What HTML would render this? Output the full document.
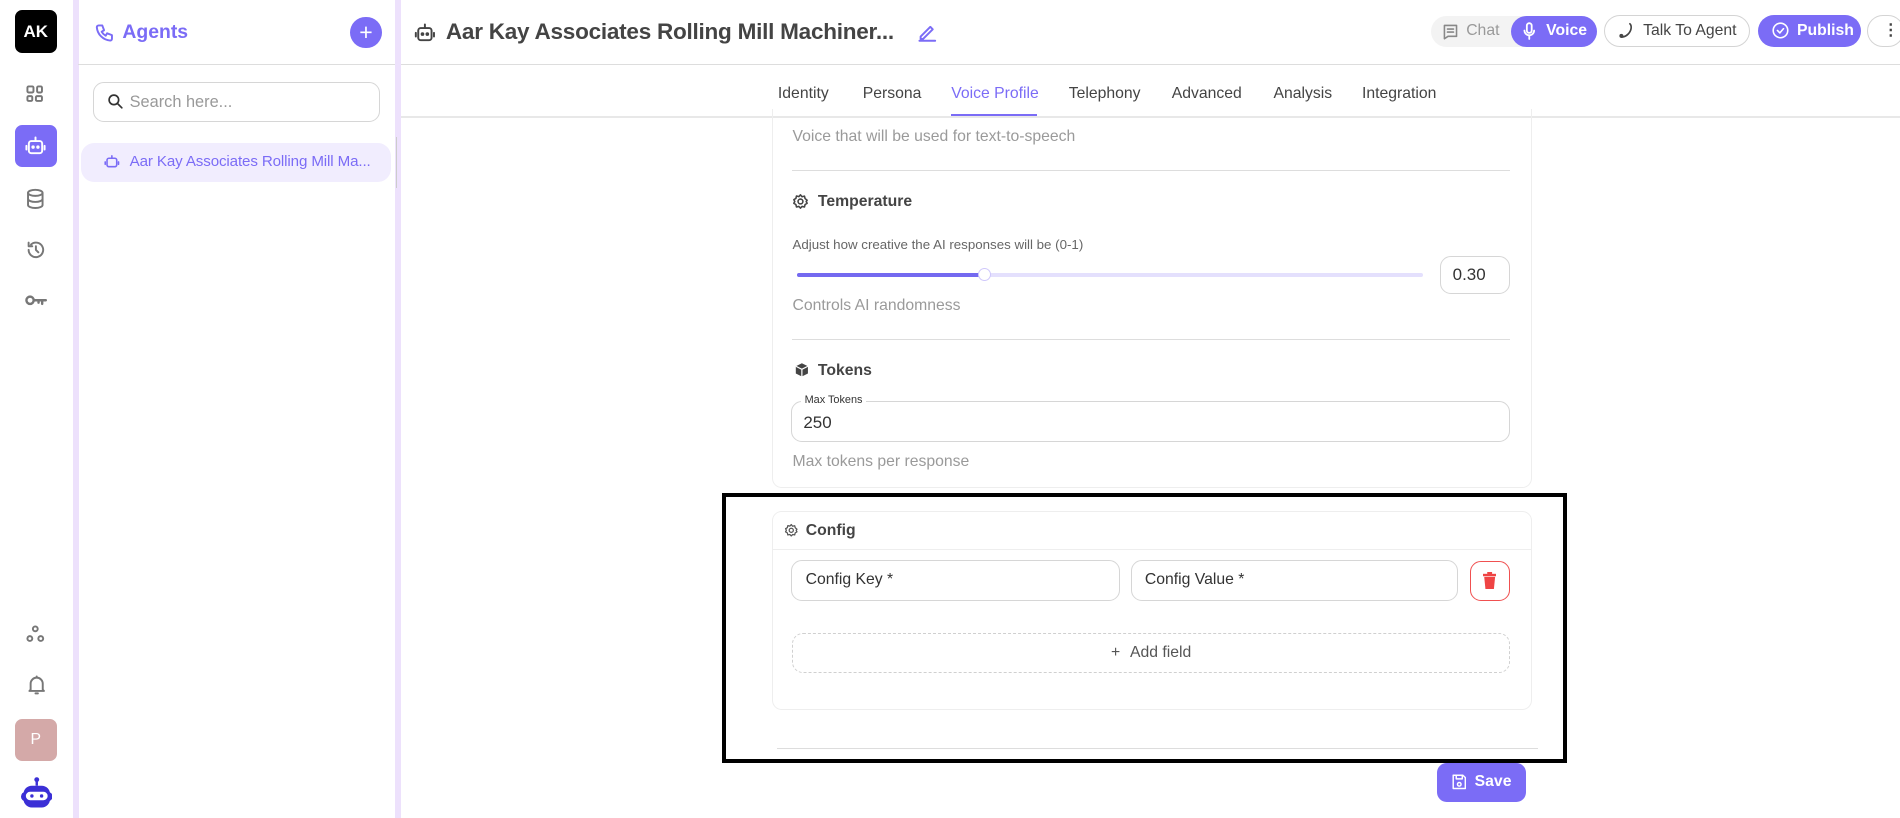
<!DOCTYPE html>
<html><head><meta charset="utf-8"><style>
*{box-sizing:border-box;margin:0;padding:0}
html,body{width:1900px;height:818px;overflow:hidden;background:#fff}
#root{position:absolute;left:0;top:0;width:1568px;height:675px;zoom:1.21173;font-family:"Liberation Sans",sans-serif;color:#444;overflow:hidden}
.a{position:absolute}
.ic{position:absolute;fill:none;stroke:#777;stroke-width:1.6;stroke-linecap:round;stroke-linejoin:round}
.strip{background:#ede1fc;top:0;height:675px;width:5px}
.tab{position:absolute;top:70px;font-size:13px;color:#444}
.hr{position:absolute;height:1px;background:#ddd}
.gray{color:#9a9a9a;font-size:13px}
.inp{position:absolute;border:1px solid #d6d6d6;border-radius:9px;background:#fff}
</style></head><body><div id="root">
<!-- left rail -->
<div class="a" style="left:12px;top:8px;width:35px;height:36px;background:#000;border-radius:6px;color:#fff;font-weight:bold;font-size:14px;line-height:36px;text-align:center">AK</div>
<svg class="ic" style="left:21px;top:69px" width="16" height="16" viewBox="0 0 16 16"><rect x="2" y="2" width="5" height="5" rx="1"/><rect x="10" y="2" width="4" height="5" rx="1"/><rect x="2" y="10" width="4" height="4" rx="1"/><rect x="9" y="10" width="5" height="4" rx="1"/></svg>
<div class="a" style="left:12px;top:103px;width:35px;height:35px;background:#7b6cf6;border-radius:6px"></div>
<svg class="ic" style="left:20px;top:111px;stroke:#fff" width="19" height="19" viewBox="0 0 19 19"><rect x="4" y="5" width="11" height="10" rx="2"/><path d="M9.5 5V2M2 9v3M17 9v3"/><circle cx="7.5" cy="10" r=".6" fill="#fff"/><circle cx="11.5" cy="10" r=".6" fill="#fff"/></svg>
<svg class="ic" style="left:21px;top:155px" width="17" height="18" viewBox="0 0 17 18"><ellipse cx="8.5" cy="4" rx="6" ry="2.5"/><path d="M2.5 4v10c0 1.4 2.7 2.5 6 2.5s6-1.1 6-2.5V4M2.5 9c0 1.4 2.7 2.5 6 2.5s6-1.1 6-2.5"/></svg>
<svg class="ic" style="left:21px;top:197px" width="18" height="18" viewBox="0 0 18 18"><path d="M3 9a6 6 0 1 0 2-4.5M3 3v3h3M9 6v3l2 2"/></svg>
<svg class="ic" style="left:20px;top:242px;stroke-width:2" width="20" height="12" viewBox="0 0 20 12"><circle cx="5" cy="6" r="3"/><path d="M8 6h10M15 6v3M12 6v2"/></svg>
<svg class="ic" style="left:21px;top:515px" width="17" height="17" viewBox="0 0 17 17"><circle cx="8.5" cy="4" r="2"/><circle cx="4" cy="12" r="2"/><circle cx="13" cy="12" r="2"/></svg>
<svg class="ic" style="left:22px;top:556px" width="16" height="18" viewBox="0 0 16 18"><path d="M3 13V8a5 5 0 0 1 10 0v5l1 1H2zM7 16h2M8 2v1"/></svg>
<div class="a" style="left:12px;top:593px;width:35px;height:35px;background:#d4a9a8;border-radius:6px;color:#fff;font-size:13px;line-height:35px;text-align:center">P</div>
<svg class="a" style="left:17px;top:640px" width="26" height="28" viewBox="0 0 26 28"><circle cx="13" cy="3" r="2" fill="#3b2fd6"/><rect x="12" y="3" width="2" height="5" fill="#3b2fd6"/><rect x="2" y="8" width="22" height="18" rx="7" fill="#3b2fd6"/><rect x="0" y="13" width="26" height="8" rx="4" fill="#3b2fd6"/><rect x="4" y="13" width="18" height="7" rx="3.5" fill="#fff"/><circle cx="9" cy="16.5" r="1.4" fill="#3b2fd6"/><circle cx="17" cy="16.5" r="1.4" fill="#3b2fd6"/></svg>
<div class="a strip" style="left:60px"></div>
<div class="a strip" style="left:326px"></div>
<!-- agents panel -->
<svg class="ic" style="left:78px;top:19px;stroke:#7b6cf6" width="16" height="16" viewBox="0 0 16 16"><path d="M3 2h3l1.5 4-2 1.2a9 9 0 0 0 3.3 3.3L10 8.5l4 1.5v3a1.5 1.5 0 0 1-1.5 1.5A12 12 0 0 1 1.5 3.5 1.5 1.5 0 0 1 3 2z"/></svg>
<div class="a" style="left:101px;top:17px;font-size:16px;font-weight:bold;color:#7b6cf6">Agents</div>
<div class="a" style="left:289px;top:14px;width:26px;height:26px;border-radius:50%;background:#7b6cf6;color:#fff;font-size:19px;line-height:25px;text-align:center">+</div>
<div class="hr" style="left:64px;top:53px;width:262px"></div>
<div class="inp" style="left:77px;top:68px;width:237px;height:33px"></div>
<svg class="ic" style="left:88px;top:77px;stroke:#333;stroke-width:1.6" width="14" height="14" viewBox="0 0 16 16"><circle cx="6.5" cy="6.5" r="4.5"/><path d="M10 10l4 4"/></svg>
<div class="a" style="left:107px;top:77px;font-size:13.5px;color:#999">Search here...</div>
<div class="a" style="left:67px;top:118px;width:256px;height:32px;background:#f1edfe;border-radius:11px"></div>
<svg class="ic" style="left:86px;top:127px;stroke:#7b6cf6;stroke-width:1.3" width="13" height="13" viewBox="0 0 13 13"><rect x="2.5" y="3.5" width="8" height="7" rx="1.5"/><path d="M6.5 3.5V1.5M1 6.5v2M12 6.5v2"/></svg>
<div class="a" style="left:107px;top:126px;font-size:12.5px;color:#7b6cf6;letter-spacing:-0.1px">Aar Kay Associates Rolling Mill Ma...</div>
<div class="a" style="left:327px;top:113px;width:1px;height:42px;background:#ccc"></div>
<!-- main header -->
<svg class="ic" style="left:342px;top:18px;stroke:#444;stroke-width:1.6" width="18" height="18" viewBox="0 0 18 18"><rect x="3.5" y="5" width="11" height="10" rx="2"/><path d="M9 5V2M1.5 9v3M16.5 9v3"/><circle cx="7" cy="10" r=".7" fill="#444"/><circle cx="11" cy="10" r=".7" fill="#444"/></svg>
<div class="a" style="left:368px;top:16px;font-size:18.6px;font-weight:bold;color:#444;letter-spacing:-0.2px">Aar Kay Associates Rolling Mill Machiner...</div>
<svg class="ic" style="left:757px;top:18px;stroke:#7b6cf6" width="17" height="17" viewBox="0 0 17 17"><path d="M3 12l8-8 2 2-8 8H3zM2 15.5h13"/></svg>
<div class="a" style="left:1181px;top:13px;width:137px;height:26px;background:#f3f3f3;border-radius:13px"></div>
<svg class="ic" style="left:1190px;top:19px;stroke:#888;stroke-width:1.3" width="14" height="14" viewBox="0 0 14 14"><path d="M2 2h10v9H5l-3 2zM4.5 5h5M4.5 7.5h5"/></svg>
<div class="a" style="left:1210px;top:18px;font-size:13px;color:#999">Chat</div>
<div class="a" style="left:1247px;top:13px;width:71px;height:26px;background:#7b6cf6;border-radius:13px"></div>
<svg class="ic" style="left:1256px;top:18px;stroke:#fff;stroke-width:1.5" width="12" height="16" viewBox="0 0 12 16"><rect x="4" y="1" width="4" height="8" rx="2"/><path d="M2 7a4 4 0 0 0 8 0M6 11v3"/></svg>
<div class="a" style="left:1276px;top:18px;font-size:13px;color:#fff;font-weight:bold">Voice</div>
<div class="a" style="left:1324px;top:12px;width:120px;height:27px;border:1px solid #d4d4d4;border-radius:14px"></div>
<svg class="ic" style="left:1336px;top:18px;stroke:#444;stroke-width:1.4" width="13" height="14" viewBox="0 0 13 14"><path d="M9 1.5c2 2 1 6-1.5 8.5S2 13 1.5 11.5"/><circle cx="2" cy="11.5" r="1" /></svg>
<div class="a" style="left:1356px;top:18px;font-size:13px;color:#444">Talk To Agent</div>
<div class="a" style="left:1451px;top:12px;width:85px;height:27px;background:#7b6cf6;border-radius:14px"></div>
<svg class="ic" style="left:1462px;top:18px;stroke:#fff;stroke-width:1.3" width="14" height="14" viewBox="0 0 14 14"><circle cx="7" cy="7" r="6"/><path d="M4.5 7l2 2 3-3.5"/></svg>
<div class="a" style="left:1483px;top:18px;font-size:13px;color:#fff;font-weight:bold">Publish</div>
<div class="a" style="left:1541px;top:12px;width:30px;height:27px;border:1px solid #d4d4d4;border-radius:14px;font-size:13px;line-height:24px;padding-left:12px;font-weight:bold">⋮</div>
<div class="hr" style="left:331px;top:53px;width:1237px"></div>
<!-- tabs -->
<div class="tab" style="left:642px">Identity</div>
<div class="tab" style="left:712px">Persona</div>
<div class="tab" style="left:785px;color:#7b6cf6">Voice Profile</div>
<div class="a" style="left:785px;top:94px;width:71px;height:2px;background:#7b6cf6"></div>
<div class="tab" style="left:882px">Telephony</div>
<div class="tab" style="left:967px">Advanced</div>
<div class="tab" style="left:1051px">Analysis</div>
<div class="tab" style="left:1124px">Integration</div>
<div class="hr" style="left:331px;top:96px;width:1237px;background:#e8e8e8"></div>
<!-- card -->
<div class="a" style="left:637px;top:90px;width:627px;height:313px;border:1px solid #eee;border-top:none;border-radius:0 0 8px 8px"></div>
<div class="a gray" style="left:654px;top:106px">Voice that will be used for text-to-speech</div>
<div class="hr" style="left:654px;top:140px;width:592px"></div>
<svg class="ic" style="left:654px;top:159px;stroke:#444;stroke-width:1.3" width="14" height="14" viewBox="0 0 14 14"><circle cx="7" cy="7" r="2"/><path d="M7 1.5l1.3 1.6 2-.5.5 2L12.5 6 11.7 7l.8 1.5-1.7 1-.5 2-2-.4L7 12.5 5.7 11.1l-2 .4-.5-2-1.7-1L2.3 7 1.5 5.5l1.7-1 .5-2 2 .5z"/></svg>
<div class="a" style="left:675px;top:159px;font-size:13px;font-weight:bold;color:#444">Temperature</div>
<div class="a" style="left:654px;top:196px;font-size:11px;color:#666">Adjust how creative the AI responses will be (0-1)</div>
<div class="a" style="left:658px;top:225px;width:516px;height:4px;background:#e4e0fd;border-radius:2px"></div>
<div class="a" style="left:658px;top:225px;width:155px;height:4px;background:#7469f0;border-radius:2px"></div>
<div class="a" style="left:807px;top:221px;width:11px;height:11px;border-radius:50%;background:#fff;border:1px solid #cfc8fb"></div>
<div class="inp" style="left:1188px;top:211px;width:58px;height:32px;font-size:14px;line-height:30px;padding-left:10px;color:#333">0.30</div>
<div class="a gray" style="left:654px;top:245px">Controls AI randomness</div>
<div class="hr" style="left:654px;top:280px;width:592px"></div>
<svg class="a" style="left:655px;top:299px" width="13" height="13" viewBox="0 0 13 13"><path d="M6.5 1l5 2.5v6L6.5 12l-5-2.5v-6z" fill="#444"/><path d="M1.5 3.5l5 2.5 5-2.5M6.5 6v6" stroke="#fff" stroke-width="1" fill="none"/></svg>
<div class="a" style="left:675px;top:299px;font-size:13px;font-weight:bold;color:#444">Tokens</div>
<div class="inp" style="left:653px;top:331px;width:593px;height:34px"></div>
<div class="a" style="left:661px;top:325px;font-size:9px;color:#333;background:#fff;padding:0 3px">Max Tokens</div>
<div class="a" style="left:663px;top:341px;font-size:14px;color:#333">250</div>
<div class="a gray" style="left:654px;top:374px">Max tokens per response</div>
<!-- config -->
<div class="a" style="left:637px;top:422px;width:627px;height:164px;border:1px solid #eee;border-radius:8px"></div>
<svg class="ic" style="left:647px;top:432px;stroke:#555;stroke-width:1.2" width="12" height="12" viewBox="0 0 14 14"><circle cx="7" cy="7" r="2"/><path d="M7 1.5l1.3 1.6 2-.5.5 2L12.5 6 11.7 7l.8 1.5-1.7 1-.5 2-2-.4L7 12.5 5.7 11.1l-2 .4-.5-2-1.7-1L2.3 7 1.5 5.5l1.7-1 .5-2 2 .5z"/></svg>
<div class="a" style="left:665px;top:431px;font-size:13px;font-weight:bold;color:#444">Config</div>
<div class="hr" style="left:637px;top:453px;width:627px;background:#eee"></div>
<div class="inp" style="left:653px;top:462px;width:271px;height:34px;font-size:13px;line-height:32px;padding-left:11px;color:#333">Config Key *</div>
<div class="inp" style="left:933px;top:462px;width:270px;height:34px;font-size:13px;line-height:32px;padding-left:11px;color:#333">Config Value *</div>
<div class="a" style="left:1213px;top:463px;width:33px;height:33px;border:1px solid #f05050;border-radius:9px"></div>
<svg class="a" style="left:1224px;top:472px" width="11" height="14" viewBox="0 0 11 14"><rect x="0" y="1.5" width="11" height="2" fill="#ef4444"/><rect x="3.5" y="0" width="4" height="2" fill="#ef4444"/><path d="M1 4h9l-1 10H2z" fill="#ef4444"/></svg>
<div class="a" style="left:654px;top:522px;width:592px;height:33px;border:1px dashed #d0d0d0;border-radius:9px;text-align:center;font-size:13px;line-height:31px;color:#555"><span style="margin-right:8px">+</span>Add field</div>
<div class="hr" style="left:641px;top:617px;width:628px"></div>
<div class="a" style="left:596px;top:407px;width:697px;height:223px;border:4px solid #000"></div>
<div class="a" style="left:1186px;top:630px;width:73px;height:32px;background:#7b6cf6;border-radius:8px"></div>
<svg class="ic" style="left:1198px;top:639px;stroke:#fff;stroke-width:1.2" width="12" height="13" viewBox="0 0 12 13"><path d="M1 1h8l2 2v9H1z"/><rect x="3.5" y="1" width="5" height="3"/><circle cx="6" cy="8.5" r="1.5"/></svg>
<div class="a" style="left:1217px;top:638px;font-size:13px;color:#fff;font-weight:bold">Save</div>
</div></body></html>
